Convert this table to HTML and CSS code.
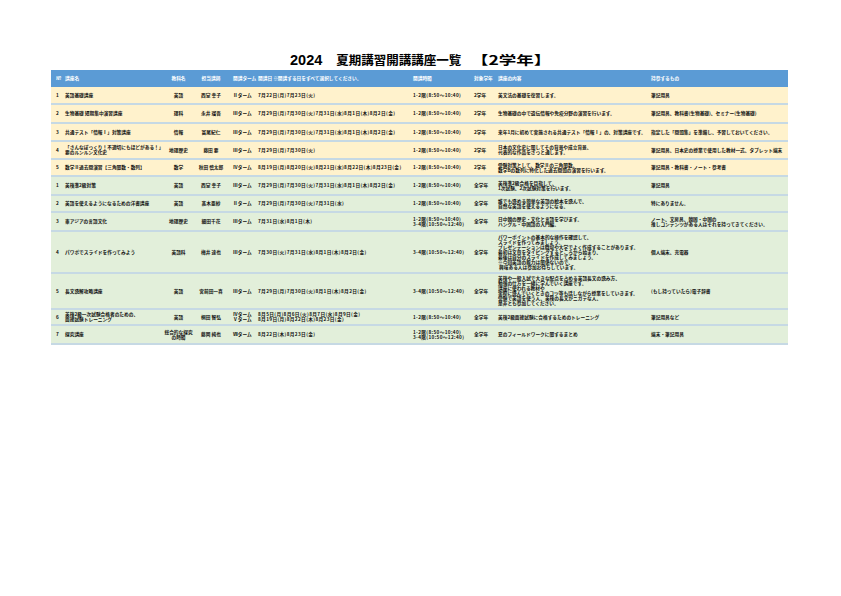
FILE: index.html
```html
<!DOCTYPE html>
<html lang="ja">
<head>
<meta charset="utf-8">
<title>2024 夏期講習開講講座一覧</title>
<link rel="stylesheet" href="styles.css">
</head>
<body>
<div class="page">
  <h1 class="title"><span class="year">2024</span><span class="name">夏期講習開講講座一覧</span><span class="grade">【2学年】</span></h1>
  <div class="table">
    <div class="row head">
      <div class="c">№</div>
      <div class="c">講座名</div>
      <div class="c mid">教科名</div>
      <div class="c mid">担当講師</div>
      <div class="c">開講ターム</div>
      <div class="c">開講日 ※開講する日をすべて選択してください。</div>
      <div class="c">開講時間</div>
      <div class="c">対象学年</div>
      <div class="c">講座の内容</div>
      <div class="c">持参するもの</div>
    </div>

    <div class="row y h18">
      <div class="c">1</div>
      <div class="c">英語基礎講座</div>
      <div class="c mid">英語</div>
      <div class="c mid">西室 幸子</div>
      <div class="c">Ⅱターム</div>
      <div class="c">7月22日(月)7月23日(火)</div>
      <div class="c">1-2限(8:50〜10:40)</div>
      <div class="c">2学年</div>
      <div class="c">英文法の基礎を復習します。</div>
      <div class="c">筆記用具</div>
    </div>

    <div class="row y h19">
      <div class="c">2</div>
      <div class="c">生物基礎 短期集中演習講座</div>
      <div class="c mid">理科</div>
      <div class="c mid">永井 瑠吾</div>
      <div class="c">Ⅲターム</div>
      <div class="c">7月29日(月)7月30日(火)7月31日(水)8月1日(木)8月2日(金)</div>
      <div class="c">1-2限(8:50〜10:40)</div>
      <div class="c">2学年</div>
      <div class="c">生物基礎の中で遺伝情報や免疫分野の演習を行います。</div>
      <div class="c">筆記用具、教科書(生物基礎)、セミナー(生物基礎)</div>
    </div>

    <div class="row y h18">
      <div class="c">3</div>
      <div class="c">共通テスト「情報Ⅰ」対策講座</div>
      <div class="c mid">情報</div>
      <div class="c mid">冨尾紀仁</div>
      <div class="c">Ⅲターム</div>
      <div class="c">7月29日(月)7月30日(火)7月31日(水)8月1日(木)8月2日(金)</div>
      <div class="c">1-2限(8:50〜10:40)</div>
      <div class="c">2学年</div>
      <div class="c">来年1月に初めて実施される共通テスト「情報Ⅰ」の、対策講座です。</div>
      <div class="c">指定した「問題集」を準備し、予習しておいてください。</div>
    </div>

    <div class="row y h18">
      <div class="c">4</div>
      <div class="c">「さんなぽっくり！不適切にもほどがある！」<br>要のルンルン文化史</div>
      <div class="c mid">地理歴史</div>
      <div class="c mid">藤田 要</div>
      <div class="c">Ⅲターム</div>
      <div class="c">7月29日(月)7月30日(火)</div>
      <div class="c">1-2限(8:50〜10:40)</div>
      <div class="c">2学年</div>
      <div class="c">日本の文化史に関してその背景や成立背景、<br>代表的な作品をざっと通します。</div>
      <div class="c">筆記用具、日本史の授業で使用した教材一式、タブレット端末</div>
    </div>

    <div class="row y h17">
      <div class="c">5</div>
      <div class="c">数学Ⅱ過去問演習【三角関数・数列】</div>
      <div class="c mid">数学</div>
      <div class="c mid">秋田 慎太郎</div>
      <div class="c">Ⅳターム</div>
      <div class="c">8月19日(月)8月20日(火)8月21日(水)8月22日(木)8月23日(金)</div>
      <div class="c">1-2限(8:50〜10:40)</div>
      <div class="c">2学年</div>
      <div class="c">受験対策として、数学Ⅱの三角関数、<br>数学Bの数列に特化した過去問題の演習を行います。</div>
      <div class="c">筆記用具・教科書・ノート・参考書</div>
    </div>

    <div class="row g h19">
      <div class="c">1</div>
      <div class="c">英検準2級対策</div>
      <div class="c mid">英語</div>
      <div class="c mid">西室 幸子</div>
      <div class="c">Ⅲターム</div>
      <div class="c">7月29日(月)7月30日(火)7月31日(水)8月1日(木)8月2日(金)</div>
      <div class="c">1-2限(8:50〜10:40)</div>
      <div class="c">全学年</div>
      <div class="c">英検準2級合格を目指して、<br>1次試験、2次試験対策を行います。</div>
      <div class="c">筆記用具</div>
    </div>

    <div class="row g h17">
      <div class="c">2</div>
      <div class="c">英語を使えるようになるための洋書講座</div>
      <div class="c mid">英語</div>
      <div class="c mid">髙木亜紗</div>
      <div class="c">Ⅱターム</div>
      <div class="c">7月29日(月)7月30日(火)7月31日(水)</div>
      <div class="c">1-2限(8:50〜10:40)</div>
      <div class="c">全学年</div>
      <div class="c">誰でも読める簡単な英語の絵本を読んで、<br>自然な英語を使えるようになる。</div>
      <div class="c">特にありません。</div>
    </div>

    <div class="row g h19">
      <div class="c">3</div>
      <div class="c">東アジアの言語文化</div>
      <div class="c mid">地理歴史</div>
      <div class="c mid">細田千花</div>
      <div class="c">Ⅲターム</div>
      <div class="c">7月31日(水)8月1日(木)</div>
      <div class="c">1-2限(8:50〜10:40)<br>3-4限(10:50〜12:40)</div>
      <div class="c">全学年</div>
      <div class="c">日中韓の歴史・文化と言語を学びます。<br>ハングル・中国語の入門編。</div>
      <div class="c">ノート、文房具、韓国・中国の<br>推しコンテンツがある人はそれを持ってきてください。</div>
    </div>

    <div class="row g h42">
      <div class="c">4</div>
      <div class="c">パワポでスライドを作ってみよう</div>
      <div class="c mid">英語科</div>
      <div class="c mid">梅井 達也</div>
      <div class="c">Ⅲターム</div>
      <div class="c">7月30日(火)7月31日(水)8月1日(木)8月2日(金)</div>
      <div class="c">3-4限(10:50〜12:40)</div>
      <div class="c">全学年</div>
      <div class="c">パワーポイントの基本的な操作を確認して、<br>スライドを作ってみましょう。<br>プレゼンテーションは職場や大学でよく作成することがあります。<br>最初は文章をタイピングするところから始まり、<br>最後は自分のスライドを作成してみましょう。<br>※今回英語の能力は関係ないので、<br>&nbsp;興味ある人は参加お待ちしています。</div>
      <div class="c">個人端末、充電器</div>
    </div>

    <div class="row g h36">
      <div class="c">5</div>
      <div class="c">長文読解攻略講座</div>
      <div class="c mid">英語</div>
      <div class="c mid">宮前田一喜</div>
      <div class="c">Ⅲターム</div>
      <div class="c">7月29日(月)7月30日(火)8月1日(木)8月2日(金)</div>
      <div class="c">3-4限(10:50〜12:40)</div>
      <div class="c">全学年</div>
      <div class="c">英検や一般入試で大きな配点を占める英語長文の読み方、<br>勉強の仕方を一緒に学んでいく講座です。<br>講座に使われる教材や<br>実際に読んでいくときのコツ等も話しながら授業をしていきます。<br>受験で英語を使う人、英検の長文がニガテな人、<br>是非とも参加してください。</div>
      <div class="c">(もし持っていたら)電子辞書</div>
    </div>

    <div class="row g h16">
      <div class="c">6</div>
      <div class="c">英検2級一次試験合格者のための、<br>面接試験トレーニング</div>
      <div class="c mid">英語</div>
      <div class="c mid">桐田 智弘</div>
      <div class="c">Ⅳターム<br>Ⅴターム</div>
      <div class="c">8月5日(月)8月6日(火)8月7日(水)8月9日(金)<br>8月19日(月)8月22日(木)8月23日(金)</div>
      <div class="c">1-2限(8:50〜10:40)</div>
      <div class="c">全学年</div>
      <div class="c">英検2級面接試験に合格するためのトレーニング</div>
      <div class="c">筆記用具など</div>
    </div>

    <div class="row g h19">
      <div class="c">7</div>
      <div class="c">探究講座</div>
      <div class="c mid">総合的な探究<br>の時間</div>
      <div class="c mid">藤岡 純也</div>
      <div class="c">Ⅶターム</div>
      <div class="c">8月22日(木)8月23日(金)</div>
      <div class="c">1-2限(8:50〜10:40)<br>3-4限(10:50〜12:40)</div>
      <div class="c">全学年</div>
      <div class="c">夏のフィールドワークに関するまとめ</div>
      <div class="c">端末・筆記用具</div>
    </div>
  </div>
</div>
</body>
</html>
```

FILE: styles.css
```css
html, body {
  margin: 0;
  padding: 0;
  background: #ffffff;
}

body {
  font-family: "Noto Sans CJK JP", "Liberation Sans", sans-serif;
  color: #111111;
}

.page {
  padding: 50px 53px 0 51px;
}

.title {
  margin: 0;
  height: 20px;
  padding-left: 239px;
  display: flex;
  align-items: center;
  font-size: 12.5px;
  line-height: 20px;
  font-weight: 700;
  color: #000000;
  white-space: nowrap;
}

.year {
  font-family: "Liberation Sans", sans-serif;
  font-size: 14.5px;
  margin-right: 14px;
}

.name {
  margin-right: 10px;
}

.grade {
  display: inline-block;
  transform: scaleX(1.4);
  transform-origin: left center;
}

.table {
  width: 737px;
}

.row {
  display: grid;
  grid-template-columns: 11px 103px 27px 38px 25px 155px 61px 24px 153px 140px;
  border-bottom: 2px solid #c6d9e4;
  box-sizing: border-box;
  font-size: 4.7px;
  line-height: 5px;
  font-weight: 700;
}

.row.head {
  height: 17px;
  background: #5b9bd5;
  color: #ffffff;
  border-bottom: none;
}

.row.y { background: #fff2cc; }
.row.g { background: #e2efda; }

.h16 { min-height: 16px; }
.h17 { min-height: 17px; }
.h18 { min-height: 18px; }
.h19 { min-height: 19px; }
.h36 { min-height: 36px; }
.h42 { min-height: 42px; }

.c {
  display: flex;
  flex-direction: column;
  justify-content: center;
  padding: 2px 2px 2px 3px;
  white-space: nowrap;
  overflow: visible;
}

.row .c:first-child {
  padding-left: 5px;
}

.row:not(.head) .c:nth-child(6),
.row:not(.head) .c:nth-child(7) {
  letter-spacing: 0.35px;
}

.c.mid {
  align-items: center;
  text-align: center;
  padding-left: 0;
  padding-right: 0;
}
```
